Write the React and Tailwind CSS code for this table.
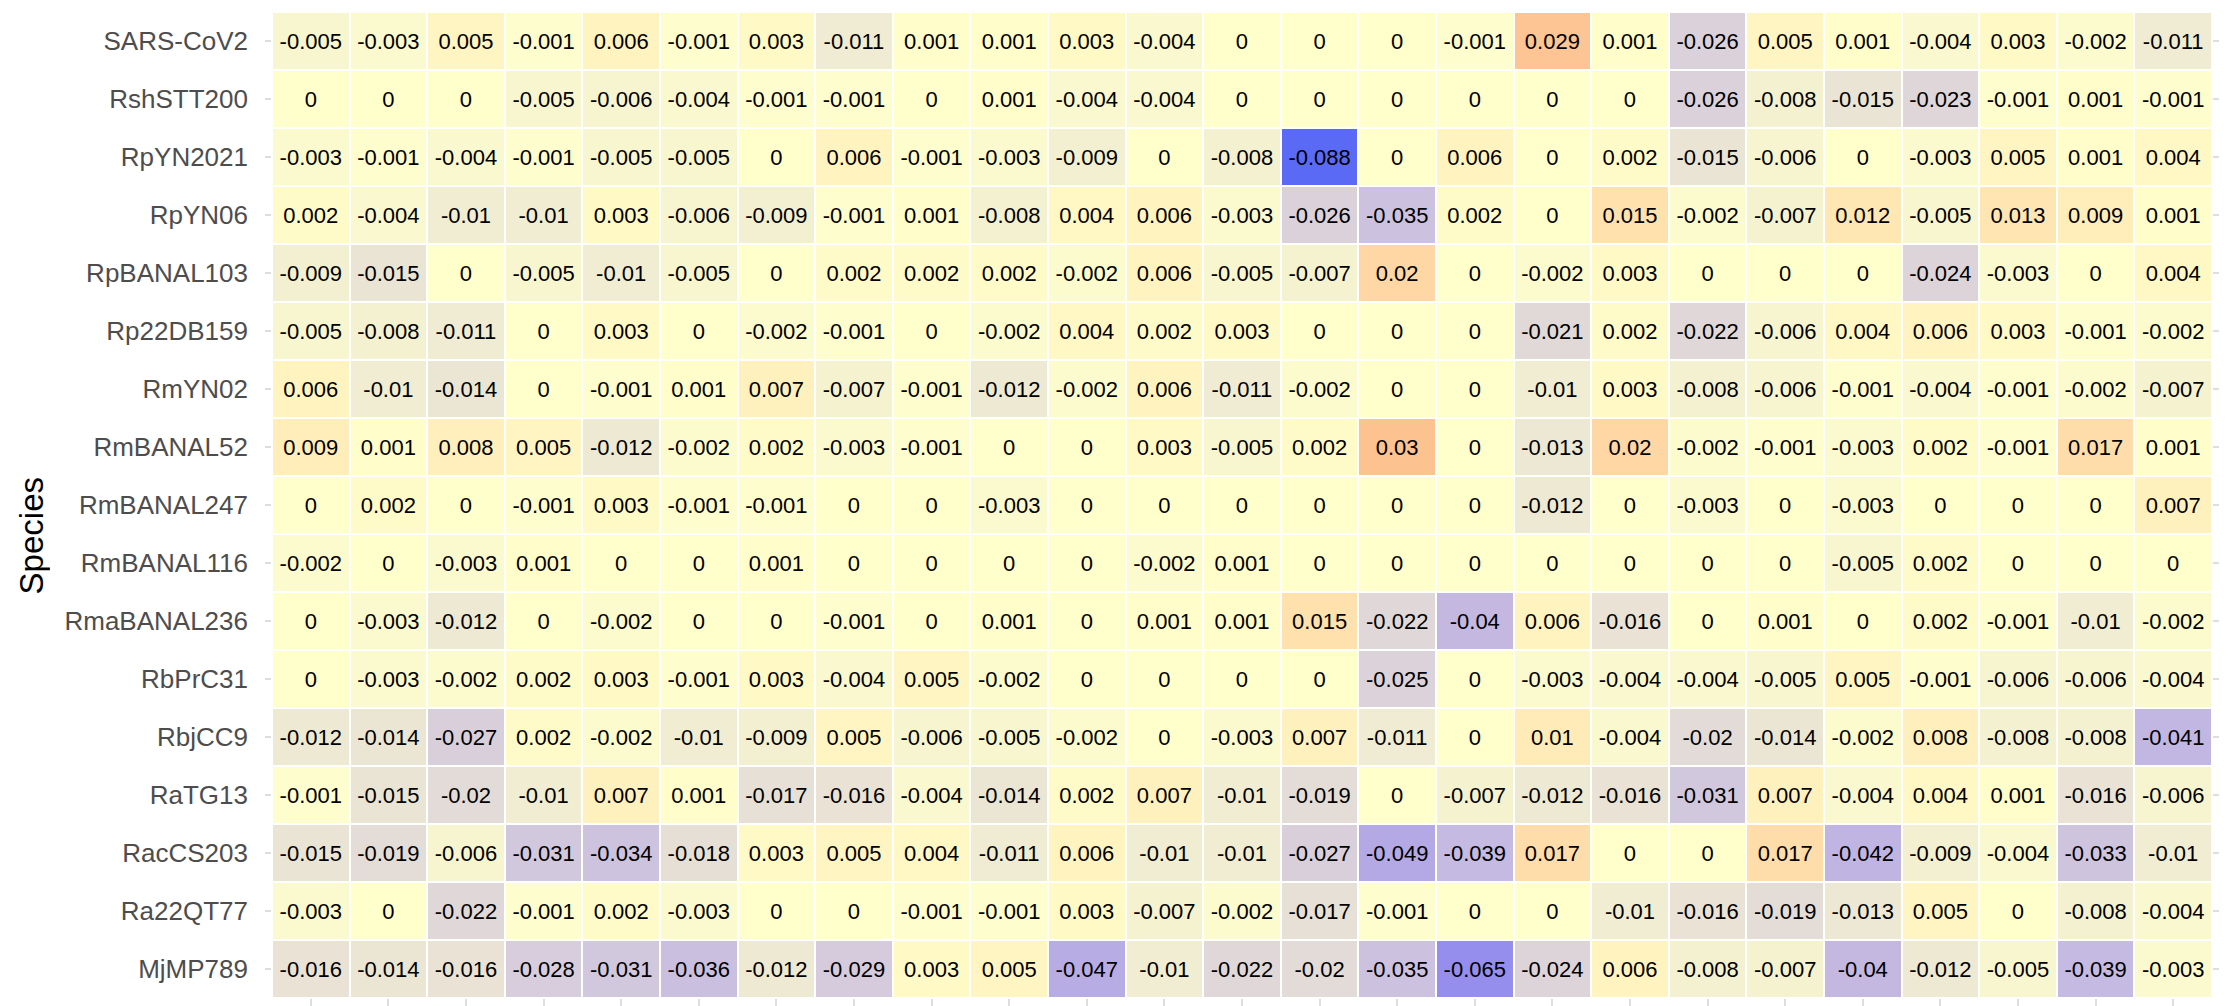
const species = [
  "SARS-CoV2", "RshSTT200", "RpYN2021", "RpYN06", "RpBANAL103", "Rp22DB159",
  "RmYN02", "RmBANAL52", "RmBANAL247", "RmBANAL116", "RmaBANAL236", "RbPrC31",
  "RbjCC9", "RaTG13", "RacCS203", "Ra22QT77", "MjMP789",
];

const values = [
  [-0.005, -0.003, 0.005, -0.001, 0.006, -0.001, 0.003, -0.011, 0.001, 0.001, 0.003, -0.004, 0, 0, 0, -0.001, 0.029, 0.001, -0.026, 0.005, 0.001, -0.004, 0.003, -0.002, -0.011],
  [0, 0, 0, -0.005, -0.006, -0.004, -0.001, -0.001, 0, 0.001, -0.004, -0.004, 0, 0, 0, 0, 0, 0, -0.026, -0.008, -0.015, -0.023, -0.001, 0.001, -0.001],
  [-0.003, -0.001, -0.004, -0.001, -0.005, -0.005, 0, 0.006, -0.001, -0.003, -0.009, 0, -0.008, -0.088, 0, 0.006, 0, 0.002, -0.015, -0.006, 0, -0.003, 0.005, 0.001, 0.004],
  [0.002, -0.004, -0.01, -0.01, 0.003, -0.006, -0.009, -0.001, 0.001, -0.008, 0.004, 0.006, -0.003, -0.026, -0.035, 0.002, 0, 0.015, -0.002, -0.007, 0.012, -0.005, 0.013, 0.009, 0.001],
  [-0.009, -0.015, 0, -0.005, -0.01, -0.005, 0, 0.002, 0.002, 0.002, -0.002, 0.006, -0.005, -0.007, 0.02, 0, -0.002, 0.003, 0, 0, 0, -0.024, -0.003, 0, 0.004],
  [-0.005, -0.008, -0.011, 0, 0.003, 0, -0.002, -0.001, 0, -0.002, 0.004, 0.002, 0.003, 0, 0, 0, -0.021, 0.002, -0.022, -0.006, 0.004, 0.006, 0.003, -0.001, -0.002],
  [0.006, -0.01, -0.014, 0, -0.001, 0.001, 0.007, -0.007, -0.001, -0.012, -0.002, 0.006, -0.011, -0.002, 0, 0, -0.01, 0.003, -0.008, -0.006, -0.001, -0.004, -0.001, -0.002, -0.007],
  [0.009, 0.001, 0.008, 0.005, -0.012, -0.002, 0.002, -0.003, -0.001, 0, 0, 0.003, -0.005, 0.002, 0.03, 0, -0.013, 0.02, -0.002, -0.001, -0.003, 0.002, -0.001, 0.017, 0.001],
  [0, 0.002, 0, -0.001, 0.003, -0.001, -0.001, 0, 0, -0.003, 0, 0, 0, 0, 0, 0, -0.012, 0, -0.003, 0, -0.003, 0, 0, 0, 0.007],
  [-0.002, 0, -0.003, 0.001, 0, 0, 0.001, 0, 0, 0, 0, -0.002, 0.001, 0, 0, 0, 0, 0, 0, 0, -0.005, 0.002, 0, 0, 0],
  [0, -0.003, -0.012, 0, -0.002, 0, 0, -0.001, 0, 0.001, 0, 0.001, 0.001, 0.015, -0.022, -0.04, 0.006, -0.016, 0, 0.001, 0, 0.002, -0.001, -0.01, -0.002],
  [0, -0.003, -0.002, 0.002, 0.003, -0.001, 0.003, -0.004, 0.005, -0.002, 0, 0, 0, 0, -0.025, 0, -0.003, -0.004, -0.004, -0.005, 0.005, -0.001, -0.006, -0.006, -0.004],
  [-0.012, -0.014, -0.027, 0.002, -0.002, -0.01, -0.009, 0.005, -0.006, -0.005, -0.002, 0, -0.003, 0.007, -0.011, 0, 0.01, -0.004, -0.02, -0.014, -0.002, 0.008, -0.008, -0.008, -0.041],
  [-0.001, -0.015, -0.02, -0.01, 0.007, 0.001, -0.017, -0.016, -0.004, -0.014, 0.002, 0.007, -0.01, -0.019, 0, -0.007, -0.012, -0.016, -0.031, 0.007, -0.004, 0.004, 0.001, -0.016, -0.006],
  [-0.015, -0.019, -0.006, -0.031, -0.034, -0.018, 0.003, 0.005, 0.004, -0.011, 0.006, -0.01, -0.01, -0.027, -0.049, -0.039, 0.017, 0, 0, 0.017, -0.042, -0.009, -0.004, -0.033, -0.01],
  [-0.003, 0, -0.022, -0.001, 0.002, -0.003, 0, 0, -0.001, -0.001, 0.003, -0.007, -0.002, -0.017, -0.001, 0, 0, -0.01, -0.016, -0.019, -0.013, 0.005, 0, -0.008, -0.004],
  [-0.016, -0.014, -0.016, -0.028, -0.031, -0.036, -0.012, -0.029, 0.003, 0.005, -0.047, -0.01, -0.022, -0.02, -0.035, -0.065, -0.024, 0.006, -0.008, -0.007, -0.04, -0.012, -0.005, -0.039, -0.003],
];

// colour scale: interpolate in Lab like ggplot's gradient2
const hexToRgb = (h) => [1, 3, 5].map((i) => parseInt(h.slice(i, i + 2), 16));

const toLab = ([r, g, b]) => {
  const lin = (c) => {
    c /= 255;
    return c > 0.04045 ? Math.pow((c + 0.055) / 1.055, 2.4) : c / 12.92;
  };
  const R = lin(r), G = lin(g), B = lin(b);
  const x = (R * 0.4124 + G * 0.3576 + B * 0.1805) / 0.95047;
  const y = R * 0.2126 + G * 0.7152 + B * 0.0722;
  const z = (R * 0.0193 + G * 0.1192 + B * 0.9505) / 1.08883;
  const f = (t) => (t > 0.008856 ? Math.cbrt(t) : 7.787 * t + 16 / 116);
  return [116 * f(y) - 16, 500 * (f(x) - f(y)), 200 * (f(y) - f(z))];
};

const fromLab = ([L, a, b]) => {
  const fy = (L + 16) / 116;
  const fx = fy + a / 500;
  const fz = fy - b / 200;
  const inv = (t) => (t * t * t > 0.008856 ? t * t * t : (t - 16 / 116) / 7.787);
  const x = inv(fx) * 0.95047, y = inv(fy), z = inv(fz) * 1.08883;
  const R = x * 3.2406 + y * -1.5372 + z * -0.4986;
  const G = x * -0.9689 + y * 1.8758 + z * 0.0415;
  const B = x * 0.0557 + y * -0.204 + z * 1.057;
  const gam = (c) => {
    c = c > 0.0031308 ? 1.055 * Math.pow(c, 1 / 2.4) - 0.055 : 12.92 * c;
    return Math.round(Math.min(1, Math.max(0, c)) * 255);
  };
  return `rgb(${gam(R)}, ${gam(G)}, ${gam(B)})`;
};

const MID = toLab(hexToRgb("#ffffcc"));
const LOW = toLab(hexToRgb("#5b6af4"));
const HIGH = toLab(hexToRgb("#fcc391"));

const fillFor = (v) => {
  const end = v < 0 ? LOW : HIGH;
  const t = v < 0 ? Math.min(1, -v / 0.088) : Math.min(1, v / 0.03);
  return fromLab(MID.map((m, i) => m + (end[i] - m) * t));
};

const Tick = ({ vertical }) =>
  vertical ? (
    <div className="w-[2px] h-[9px] bg-[#dedede]" />
  ) : (
    <div className="w-[6px] h-[2px] bg-[#dedede]" />
  );

export default function App() {
  return (
    <div
      className="w-[2230px] h-[1006px] overflow-hidden bg-white pt-[13px]"
      style={{ fontFamily: '"Liberation Sans", Arial, sans-serif' }}
    >
      <div className="flex">
        <div className="w-[64px] h-[984px] flex items-center pl-[15px] pt-[62px]">
          <span className="[writing-mode:vertical-rl] rotate-180 text-[33px] leading-none text-black">
            Species
          </span>
        </div>

        <div className="w-[184px] flex flex-col gap-[2px]">
          {species.map((s) => (
            <div key={s} className="h-[56px] flex items-center justify-end text-[26px] text-[#4d4d4d]">
              {s}
            </div>
          ))}
        </div>

        <div className="w-[17px]" />

        <div className="w-[6px] flex flex-col gap-[2px]">
          {species.map((s) => (
            <div key={s} className="h-[56px] flex items-center">
              <Tick />
            </div>
          ))}
        </div>

        <div className="ml-[2px] w-[1938px] h-[984px] grid grid-cols-[repeat(25,minmax(0,1fr))] grid-rows-[repeat(17,minmax(0,1fr))] gap-[2px]">
          {values.map((row, r) =>
            row.map((v, c) => (
              <div
                key={`${r}-${c}`}
                className="flex items-center justify-center text-[22px] text-black"
                style={{ backgroundColor: fillFor(v) }}
              >
                {String(v)}
              </div>
            ))
          )}
        </div>

        <div className="ml-[2px] w-[6px] flex flex-col gap-[2px]">
          {species.map((s) => (
            <div key={s} className="h-[56px] flex items-center">
              <Tick />
            </div>
          ))}
        </div>
      </div>

      <div className="ml-[273px] mt-[2px] w-[1938px] grid grid-cols-[repeat(25,minmax(0,1fr))] gap-[2px]">
        {values[0].map((_, c) => (
          <div key={c} className="flex justify-center">
            <Tick vertical />
          </div>
        ))}
      </div>
    </div>
  );
}
